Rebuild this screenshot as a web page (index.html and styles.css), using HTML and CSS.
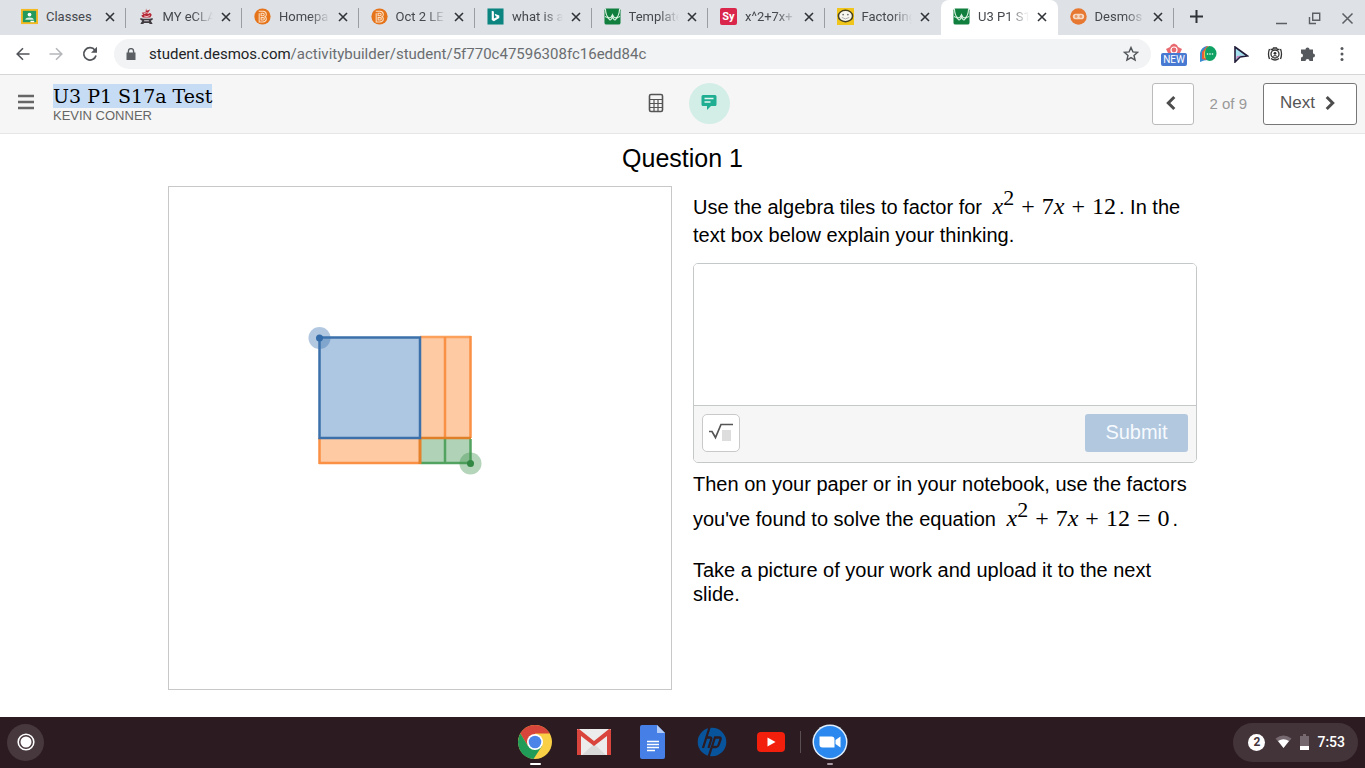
FILE: index.html
```html
<!DOCTYPE html>
<html lang="en">
<head>
<meta charset="utf-8">
<title>U3 P1 S17a Test</title>
<link rel="stylesheet" href="styles.css">
</head>
<body>
<svg class="defs" aria-hidden="true">
  <symbol id="close" viewBox="0 0 10 10"><path d="M1 1l8 8M9 1l-8 8" stroke="currentColor" stroke-width="1.600" fill="none"/></symbol>
  <symbol id="orange-b" viewBox="0 0 18 18"><circle cx="9" cy="9" r="8.600" fill="#e5731a"/><path d="M5 3.500h4.600q3.400.2 3.400 3t-2 2.500q2.300.6 2 3t-3.400 2.800H5.500V5.500M7.500 5.500h2q1.300 0 1.300 1.300T9.500 8.200h-2zM7.500 10.200h2.200q1.300 0 1.300 1.300t-1.300 1.300H7.500z" fill="none" stroke="#fde0c4" stroke-width="1.100"/></symbol>
  <symbol id="desmos" viewBox="0 0 18 18"><rect x=".5" y=".5" width="17" height="17" rx="2" fill="#11803f"/><path d="M1.500 1Q2 9 5.500 10.500M16.500 1Q16 9 12.500 10.500M1 9q3 .5 5 3.500 1.500 1 3-3.500 1.500 4.500 3 3.500 2-3 5-3.500M5.500 10.500Q7.500 10.500 9 7q1.500 3.500 3.500 3.500" fill="none" stroke="#d7f0df" stroke-width="1.200"/></symbol>
</svg>

<nav class="tabbar" aria-label="Browser tabs">
  <div class="tabs">
    <div class="tab"><svg class="fav" viewBox="0 0 18 18"><path fill="#f5b921" d="M0 1h18v16H0z"/><path fill="#249b5c" d="M2 3h14v12H2z"/><circle cx="9" cy="7" r="2" fill="#fff"/><path fill="#d9efe2" d="M4.500 12.500Q5 10 9 10t4.500 2.500z"/><path fill="#fff" d="M10 13.500h4V15h-4z"/></svg><span class="label">Classes</span><button class="x" aria-label="Close"><svg><use href="#close"/></svg></button></div>
    <div class="tab"><svg class="fav" viewBox="0 0 18 18"><path d="M8.500.5l.7 2.500L13 1.500 10.500 5q3.500 0 4 2.500L13 10H5L3.500 8l2-1L4 5l4-.5z" fill="#b62735"/><path d="M6 6q3-2 6 0M6.500 8.500q3 1.500 6-.5" stroke="#f0c9cc" fill="none"/><path d="M2.500 10.500l3 1h7l3-1v2l-2 1 2 3.500h-3l-1-1h-5l-1 1h-3l2-3.500-2-1z" fill="#403b40"/><path d="M6.500 13.500h5" stroke="#ddd"/></svg><span class="label">MY eCLA</span><button class="x" aria-label="Close"><svg><use href="#close"/></svg></button></div>
    <div class="tab"><svg class="fav"><use href="#orange-b"/></svg><span class="label">Homepa</span><button class="x" aria-label="Close"><svg><use href="#close"/></svg></button></div>
    <div class="tab"><svg class="fav"><use href="#orange-b"/></svg><span class="label">Oct 2 LE</span><button class="x" aria-label="Close"><svg><use href="#close"/></svg></button></div>
    <div class="tab"><svg class="fav" viewBox="0 0 18 18"><path fill="#0c8580" d="M.5.5h17v17H.5z"/><path fill="#fff" d="M5 3l2.300.8v7.400l3.200-1.800-1.500-.8-1-2.400 5 1.800v2.600l-5.700 3.500L5 12.600z"/></svg><span class="label">what is a</span><button class="x" aria-label="Close"><svg><use href="#close"/></svg></button></div>
    <div class="tab"><svg class="fav"><use href="#desmos"/></svg><span class="label">Template</span><button class="x" aria-label="Close"><svg><use href="#close"/></svg></button></div>
    <div class="tab"><span class="fav sy">Sy</span><span class="label">x^2+7x+</span><button class="x" aria-label="Close"><svg><use href="#close"/></svg></button></div>
    <div class="tab"><svg class="fav" viewBox="0 0 18 18"><path fill="#f0c51c" d="M0 0h18v18H0z"/><ellipse cx="9" cy="8.500" rx="7.500" ry="6" fill="#f8f7ef" stroke="#45401f" stroke-width="1.600"/><circle cx="6.500" cy="7" r="1" fill="#777"/><circle cx="11.500" cy="7" r="1" fill="#777"/><path d="M5 10q4 3 8 0" fill="none" stroke="#aaa"/></svg><span class="label">Factoring</span><button class="x" aria-label="Close"><svg><use href="#close"/></svg></button></div>
    <div class="tab active"><svg class="fav"><use href="#desmos"/></svg><span class="label">U3 P1 S1</span><button class="x" aria-label="Close"><svg><use href="#close"/></svg></button></div>
    <div class="tab"><svg class="fav" viewBox="0 0 18 18"><circle cx="9" cy="9" r="8.700" fill="#e77832"/><rect x="3" y="6" width="12" height="6" rx="3" fill="#f6d9c4"/><circle cx="6.500" cy="9" r="1.500" fill="#e99a68"/><circle cx="11.500" cy="9" r="1.500" fill="#e99a68"/></svg><span class="label">Desmos</span><button class="x" aria-label="Close"><svg><use href="#close"/></svg></button></div>
  </div>
  <div class="window-tools">
    <button class="tool" aria-label="New tab"><svg width="13" height="13" viewBox="0 0 13 13"><path d="M6.500 0v13M0 6.500h13" stroke="#303337" stroke-width="2"/></svg></button>
    <div class="window-controls">
      <button class="tool" aria-label="Minimize"><svg width="13" height="13" viewBox="0 0 13 13"><path d="M1 11.500h11" stroke="#5b5e63" stroke-width="1.500"/></svg></button>
      <button class="tool" aria-label="Restore"><svg width="13" height="13" viewBox="0 0 13 13"><path d="M4.700 1.200h7v7h-7zM1.500 5v6.500H8" fill="none" stroke="#5b5e63" stroke-width="1.400"/></svg></button>
      <button class="tool" aria-label="Close window"><svg width="13" height="13" viewBox="0 0 13 13"><path d="M1.500 1.500l10 10M11.500 1.500l-10 10" stroke="#5b5e63" stroke-width="1.500"/></svg></button>
    </div>
  </div>
</nav>

<div class="toolbar">
  <div class="history">
    <button class="tool" aria-label="Back"><svg width="14" height="14" viewBox="0 0 14 14"><path d="M13.500 7H1.500M7 1.200L1.200 7 7 12.800" fill="none" stroke="#515458" stroke-width="1.600"/></svg></button>
    <button class="tool" aria-label="Forward"><svg width="14" height="14" viewBox="0 0 14 14"><path d="M.5 7h12M7 1.200L12.800 7 7 12.800" fill="none" stroke="#b5b7ba" stroke-width="1.600"/></svg></button>
    <button class="tool" aria-label="Reload"><svg width="16" height="16" viewBox="0 0 16 16"><path d="M13 4.200A6.200 6.200 0 1 0 14 9.500" fill="none" stroke="#515458" stroke-width="1.700"/><path d="M15 .8v6H9z" fill="#515458"/></svg></button>
  </div>
  <div class="omnibox">
    <svg width="10" height="13" viewBox="0 0 10 13"><path d="M.5 4.500h9V12h-9z" fill="#5b5e63"/><path d="M2.400 5V3.200a2.600 2.600 0 0 1 5.200 0V5" fill="none" stroke="#5b5e63" stroke-width="1.400"/></svg>
    <span class="url"><span class="host">student.desmos.com</span>/activitybuilder/student/5f770c47596308fc16edd84c</span>
    <button class="tool" aria-label="Bookmark"><svg width="16" height="16" viewBox="0 0 16 16"><path d="M8 1.500l1.900 4.400 4.700.4L11 9.400l1.100 4.700L8 11.600l-4.100 2.500L5 9.400 1.400 6.300l4.700-.4z" fill="none" stroke="#515458" stroke-width="1.400"/></svg></button>
  </div>
  <div class="extensions">
    <button class="tool" aria-label="New extension"><svg width="26" height="24" viewBox="0 0 26 24"><path d="M5 7l4-2 1-2 3-1.500L16 3l1 2 4 2-2.500 5h-11z" fill="#e86a70"/><circle cx="13" cy="8" r="3" fill="none" stroke="#fff" stroke-width="1.200"/><rect y="11" width="26" height="13" rx="2" fill="#4879d2"/><text x="13" y="21" text-anchor="middle" class="badge-text">NEW</text></svg></button>
    <button class="tool" aria-label="Chat extension"><svg width="18" height="18" viewBox="0 0 18 18"><path d="M1 17V8a8 8 0 0 1 8-7v14q-4 0-8 2z" fill="#3a8bd2"/><path d="M3 14V7l5-6 3 1-4 13z" fill="#e75c3d"/><path d="M5 13V7l4-6 2 13z" fill="#f3bd3b"/><path d="M10.500 1a7 7.500 0 0 1 0 15q-4.500 0-4.500-7 0-7 4.500-8z" fill="#10a264"/><circle cx="8.500" cy="9" r=".8" fill="#fff"/><circle cx="11" cy="9" r=".8" fill="#fff"/><circle cx="13.500" cy="9" r=".8" fill="#fff"/></svg></button>
    <button class="tool" aria-label="Cursor extension"><svg width="16" height="17" viewBox="0 0 16 17"><path d="M2 1l12.500 9L7 11l-5 5z" fill="#a5e1ee" stroke="#221c3a" stroke-width="1.600"/><path d="M4 10l6-.5-4 1-3 3z" fill="#d777bd"/></svg></button>
    <button class="tool" aria-label="Camera extension"><svg width="16" height="16" viewBox="0 0 16 16"><path d="M2.500 3Q.5 8 2.500 13M13.500 3q2 5 0 10M3.500 3.500h2l1-1.500h3l1 1.500h2M4 12.500q4 3 8 0" fill="none" stroke="#333" stroke-width="1.300"/><circle cx="8" cy="8" r="4" fill="none" stroke="#333" stroke-width="1.300"/><circle cx="8" cy="7.300" r="1.400" fill="#333"/><path d="M5.500 10.500q2.500-2 5 0" stroke="#333" fill="none"/></svg></button>
    <button class="tool" aria-label="Extensions"><svg width="16" height="16" viewBox="0 0 16 16"><path d="M1 3.500h4.500a2 2 0 1 1 4 0H13v4a2 2 0 1 1 0 4V15H9.500a2 2 0 0 0-4 0H1v-3.500a2 2 0 0 0 0-4z" fill="#55585c"/></svg></button>
    <button class="tool" aria-label="Menu"><svg width="4" height="16" viewBox="0 0 4 16"><g fill="#55585c"><circle cx="2" cy="2.500" r="1.500"/><circle cx="2" cy="8" r="1.500"/><circle cx="2" cy="13.500" r="1.500"/></g></svg></button>
  </div>
</div>

<header class="header">
  <div class="header-left">
    <button class="tool menu" aria-label="Activity menu"><svg width="16" height="16" viewBox="0 0 16 16"><path d="M0 2h16M0 8h16M0 14h16" stroke="#666" stroke-width="2.400"/></svg></button>
    <div>
      <h1 class="activity"><span>U3 P1 S17a Test</span></h1>
      <div class="student">KEVIN CONNER</div>
    </div>
  </div>
  <div class="header-center">
    <button class="round" aria-label="Calculator"><svg width="16" height="20" viewBox="0 0 16 20"><rect x="1.500" y="1.500" width="13" height="17" rx="1.500" fill="none" stroke="#555" stroke-width="1.600"/><path d="M2 6.500h12M2 10.500h12M2 14.500h12M6 6.500V18M10 6.500V18" stroke="#555" stroke-width="1.200"/></svg></button>
    <button class="round chat" aria-label="Feedback"><svg width="16" height="17" viewBox="0 0 16 17"><path d="M2 1h12q1.500 0 1.500 1.500v8q0 1.500-1.500 1.500h-4l-4 4v-4H2Q.5 12 .5 10.500v-8Q.5 1 2 1z" fill="#1fae92"/><path d="M3.500 4.500h9M3.500 8h6" stroke="#e3f5f0" stroke-width="1.500"/></svg></button>
  </div>
  <div class="header-right">
    <button class="prev" aria-label="Previous"><svg width="10" height="16" viewBox="0 0 10 16"><path d="M8.300 2L2.300 8l6 6" fill="none" stroke="#4d4d4d" stroke-width="3"/></svg></button>
    <span class="count">2 of 9</span>
    <button class="next">Next<svg width="10" height="16" viewBox="0 0 10 16"><path d="M1.700 2l6 6-6 6" fill="none" stroke="#4d4d4d" stroke-width="3"/></svg></button>
  </div>
</header>

<main class="main">
  <h2 class="question">Question 1</h2>
  <div class="columns">
    <svg class="graph" viewBox="0 0 502 502" role="img" aria-label="Algebra tiles">
      <g fill="#fdcaa4">
        <rect x="251" y="150" width="50" height="101"/><rect x="150" y="251" width="101" height="25"/>
      </g>
      <rect x="251" y="251" width="50" height="25" fill="#b0d2b6"/>
      <rect x="150" y="150" width="101" height="101" fill="#adc6e1"/>
      <path d="M251 150h51" stroke="#fba15c" stroke-width="2.500"/>
      <path d="M276 150v101M301.500 149v102M150.500 251v26M150 276h101" stroke="#fa9043" stroke-width="2.500" fill="none"/>
      <path d="M251 276h51M276 252v25M301.500 252v25" stroke="#52a260" stroke-width="2.500"/>
      <path d="M252 251h50" stroke="#df8029" stroke-width="2.500"/><path d="M251 251v26" stroke="#e5802b" stroke-width="3"/>
      <rect x="150.500" y="150.500" width="100.500" height="100.500" fill="none" stroke="#3b70aa" stroke-width="2.500"/>
      <circle cx="150.500" cy="151" r="11" fill="#3f76b1" opacity=".4"/><circle cx="150.500" cy="151" r="3.500" fill="#336ca9"/>
      <circle cx="301.500" cy="276.500" r="11" fill="#439750" opacity=".4"/><circle cx="301.500" cy="276.500" r="3.500" fill="#328743"/>
    </svg>
    <div class="prompt">
      <p class="intro">Use the algebra tiles to factor for <span class="math"><i>x</i><sup>2</sup><b>+</b>7<i>x</i><b>+</b>12</span>. In the text box below explain your thinking.</p>
      <div class="answer">
        <textarea class="answer-text" aria-label="Your answer"></textarea>
        <div class="answer-bar">
          <button class="root" aria-label="Insert math"><svg width="24" height="20" viewBox="0 0 24 20"><path d="M13 8h9v11h-9z" fill="#ddd"/><path d="M0 9.500h3l3.500 6L12 2.500h12" fill="none" stroke="#555" stroke-width="1.700"/></svg></button>
          <button class="submit">Submit</button>
        </div>
      </div>
      <p class="then">Then on your paper or in your notebook, use the factors you've found to solve the equation <span class="math"><i>x</i><sup>2</sup><b>+</b>7<i>x</i><b>+</b>12<b>=</b>0</span>.</p>
      <p class="upload">Take a picture of your work and upload it to the next slide.</p>
    </div>
  </div>
</main>

<footer class="shelf">
  <button class="launcher" aria-label="Launcher"><svg width="18" height="18" viewBox="0 0 18 18"><circle cx="9" cy="9" r="7.800" fill="none" stroke="#fff" stroke-width="1.600"/><circle cx="9" cy="9" r="5.500" fill="#fff"/></svg></button>
  <div class="apps">
    <button class="app running" aria-label="Chrome"><svg viewBox="0 0 36 36"><circle cx="18" cy="18" r="17" fill="#f9cf45"/><path d="M3.300 9.500a17 17 0 0 1 29.400 0H18v8L11 22z" fill="#d8453a"/><path d="M3.300 9.500A17 17 0 0 0 16.500 35L25 22H11z" fill="#219b58"/><circle cx="18" cy="18" r="8" fill="#fff"/><circle cx="18" cy="18" r="6.300" fill="#4b84e8"/></svg></button>
    <button class="app" aria-label="Gmail"><svg viewBox="0 0 36 36"><path d="M1 5h34v26H1z" fill="#ececec"/><path d="M6 31l12-11 12 11z" fill="#d9d9d9"/><path d="M1 6q0-1 2-1l15 12L33 5q2 0 2 1v25h-4V12L18 22 5 12v19H1z" fill="#d9453d"/></svg></button>
    <button class="app" aria-label="Docs"><svg viewBox="0 0 36 36"><path d="M7 1h15l8 8v24q0 2-2 2H7q-2 0-2-2V3q0-2 2-2z" fill="#4680e6"/><path d="M22 1l8 8h-8z" fill="#b3cdf8"/><path d="M12 17.500h12M12 20.500h12M12 23.500h12M12 26.500h8" stroke="#fff" stroke-width="1.500"/></svg></button>
    <button class="app" aria-label="HP"><svg viewBox="0 0 36 36"><circle cx="18" cy="18" r="14.300" fill="#08549c"/><path d="M15.500 3.500L9 24M12.300 13.500H16q1.800 0 1.200 2L14.500 24M21.300 12.500L14.500 33M21 13.500h4.200q2 0 1.300 2l-2 5.500q-.6 2-2.400 2H18" fill="none" stroke="#2c1c22" stroke-width="2.300"/></svg></button>
    <button class="app" aria-label="YouTube"><svg viewBox="0 0 36 36"><rect x="4" y="8" width="28" height="20" rx="4" fill="#f21f0d"/><path d="M14.500 13.500l8 4.500-8 4.500z" fill="#fff"/></svg></button>
    <button class="app zoom running" aria-label="Zoom"><svg viewBox="0 0 36 36"><circle cx="18" cy="18" r="17.500" fill="#dfeefc"/><circle cx="18" cy="18" r="16" fill="#2a88ee"/><path d="M7.500 12.500h12q3 0 3 3v8h-12q-3 0-3-3zM23.500 16l5-3.500v11l-5-3.500z" fill="#fff"/></svg></button>
  </div>
  <div class="tray">
    <span class="notices">2</span>
    <svg width="17" height="14" viewBox="0 0 17 14"><path d="M.5 3.500q8-6 16 0l-8 9.500z" fill="#776970"/><path d="M3 6q5.500-3.500 11 0l-5.500 7z" fill="#fff"/></svg>
    <svg width="9" height="16" viewBox="0 0 9 16"><path d="M0 2h3V0h3v2h3v14H0z" fill="#75686e"/><path d="M0 12h9v4H0z" fill="#fff"/></svg>
    <span>7:53</span>
  </div>
</footer>
</body>
</html>
```

FILE: styles.css
```css
* { box-sizing: border-box; }
body {
  margin: 0;
  min-height: 100vh;
  display: flex;
  flex-direction: column;
  background: #fff;
  color: #000;
  font-family: "Liberation Sans", Arial, sans-serif;
}
button { font: inherit; cursor: pointer; }
svg { display: block; flex: none; }
.defs { position: absolute; width: 0; height: 0; }
.tool {
  display: flex;
  align-items: center;
  justify-content: center;
  padding: 0;
  border: 0;
  background: none;
}

/* Tabs */
.tabbar {
  display: flex;
  height: 35px;
  padding-left: 9px;
  background: #dee1e6;
  font-family: Roboto, sans-serif;
  font-size: 13px;
  color: #45484d;
}
.tabs { flex: 1; display: flex; min-width: 0; }
.tab {
  flex: 1 1 0;
  min-width: 0;
  display: flex;
  align-items: center;
  gap: 8px;
  padding: 0 11px 2px 12px;
  background: linear-gradient(#9a9da2, #9a9da2) right center / 1px 20px no-repeat;
}
.tab.active { background: #fff; border-radius: 8px 8px 0 0; }
.tab:has(+ .active) { background: none; }
.fav { width: 17px; height: 17px; flex: none; }
.sy {
  background: #d9264a;
  border-radius: 2px;
  color: #fff;
  font-size: 11px;
  font-weight: 700;
  line-height: 17px;
  text-align: center;
}
.label {
  flex: 1;
  min-width: 0;
  overflow: hidden;
  white-space: nowrap;
  line-height: 20px;
  mask-image: linear-gradient(to right, #000 60%, transparent);
}
.tab:first-child .label { mask-image: none; }
.x { width: 10px; height: 10px; padding: 0; border: 0; background: none; color: #303337; }
.x svg { width: 10px; height: 10px; }
.window-tools {
  display: flex;
  align-items: center;
  justify-content: space-between;
  width: 191px;
  padding: 0 11px 2px 16px;
}
.window-controls { display: flex; gap: 20px; padding-top: 4px; }

/* Address bar */
.toolbar {
  display: flex;
  align-items: center;
  height: 40px;
  padding-bottom: 1px;
  border-bottom: 1px solid #d5d6d8;
  background: #fff;
}
.history { display: flex; justify-content: space-between; width: 114px; padding: 0 16px; }
.omnibox {
  flex: 1;
  display: flex;
  align-items: center;
  gap: 13px;
  height: 30px;
  padding: 0 12px;
  border-radius: 15px;
  background: #f1f3f4;
  font: 15px/20px Roboto, sans-serif;
  color: #6a6d71;
}
.url { flex: 1; }
.host { color: #222427; }
.extensions {
  display: flex;
  align-items: center;
  justify-content: space-between;
  width: 214px;
  padding: 0 10px;
}
.extensions .tool { width: 26px; }
.badge-text { fill: #fff; font: 10px Roboto, sans-serif; }

/* Activity header */
.header {
  display: grid;
  grid-template-columns: 1fr auto 1fr;
  align-items: center;
  min-height: 59px;
  padding: 0 8px 1px;
  border-bottom: 1px solid #e6e6e6;
  background: #f6f6f6;
}
.header-left { display: flex; align-items: center; gap: 19px; padding-left: 10px; }
.menu { padding-bottom: 3px; }
.activity { margin: 0; font: 19px/24px "DejaVu Serif", serif; }
.activity span { display: inline-block; background: #c6dcf5; }
.student { font-size: 13px; line-height: 16px; color: #666; }
.header-center { display: flex; gap: 12px; }
.round {
  display: flex;
  align-items: center;
  justify-content: center;
  width: 41px;
  height: 41px;
  padding: 0 0 2px;
  border: 0;
  border-radius: 50%;
  background: none;
}
.chat { background: #d3ede7; }
.header-right { display: flex; align-items: center; justify-content: flex-end; gap: 16px; }
.prev, .next {
  display: flex;
  align-items: center;
  justify-content: center;
  height: 42px;
  border: 1px solid #bbb;
  border-radius: 3px;
  background: #fff;
  color: #555;
}
.prev { width: 42px; padding: 0 3px 2px 0; }
.next { gap: 10px; padding: 0 21px 2px 16px; border-color: #777; font-size: 17px; }
.count { font-size: 15px; color: #999; }

/* Question */
.main { flex: 1; padding: 0 24px 24px; }
.question { margin: 0 0 4px; font-size: 25px; line-height: 48px; font-weight: 400; text-align: center; }
.columns {
  display: grid;
  grid-template-columns: 1fr 1fr;
  gap: 21px;
  align-items: start;
  max-width: 1029px;
  margin: 0 auto;
}
.graph { width: 100%; border: 1px solid #c8c8c8; }
.prompt { padding-top: 7px; font-size: 20px; line-height: 24px; }
.prompt p { margin: 0; }
.prompt .intro { margin-bottom: 14px; line-height: 28px; }
.prompt .then { margin: 4px 0 21px; line-height: 35px; }
.math {
  margin: 0 3px 0 5px;
  font-family: "Liberation Serif", "Times New Roman", serif;
  font-size: 24px;
  line-height: 0;
  white-space: nowrap;
}
.math b { margin: 0 7px; font-weight: 400; }
.math sup { font-size: 22px; line-height: 0; vertical-align: 9px; }
.answer { overflow: hidden; border: 1px solid #c5c8c8; border-radius: 5px; }
.answer-text {
  display: block;
  width: 100%;
  height: 142px;
  padding: 10px;
  border: 0;
  border-bottom: 1px solid #c5c8c8;
  outline: 0;
  resize: none;
  font: inherit;
}
.answer-bar { display: flex; justify-content: space-between; padding: 8px 8px 10px; background: #f6f6f6; }
.root {
  display: flex;
  align-items: center;
  justify-content: center;
  width: 38px;
  height: 38px;
  padding: 0 0 2px;
  border: 1px solid #c9c9c9;
  border-radius: 5px;
  background: #fff;
}
.submit { width: 103px; height: 38px; padding: 0 0 2px; border: 0; border-radius: 3px; background: #b2c8df; color: #f6fafe; }

/* Shelf */
.shelf {
  display: grid;
  grid-template-columns: 1fr auto 1fr;
  align-items: center;
  height: 51px;
  padding: 0 7px 1px;
  background: #2c1c22;
}
.launcher {
  display: flex;
  align-items: center;
  justify-content: center;
  width: 37px;
  height: 37px;
  padding: 0;
  border: 0;
  border-radius: 50%;
  background: #47383e;
}
.apps { display: flex; gap: 23px; }
.app { position: relative; width: 36px; height: 36px; padding: 0; border: 0; background: none; }
.app svg { width: 36px; height: 36px; }
.running::after {
  content: "";
  position: absolute;
  bottom: -5px;
  left: 50%;
  width: 11px;
  height: 2px;
  margin-left: -5px;
  border-radius: 1px;
  background: #fff;
}
.zoom.running::after { width: 6px; margin-left: -3px; background: #a899a3; }
.zoom::before {
  content: "";
  position: absolute;
  top: 7px;
  left: -12px;
  width: 1px;
  height: 22px;
  background: #5c4f54;
}
.tray {
  justify-self: end;
  display: flex;
  align-items: center;
  gap: 8px;
  height: 39px;
  padding: 0 13px 0 15px;
  border-radius: 20px;
  background: #43343a;
  color: #fff;
  font: 500 14px/20px Roboto, sans-serif;
}
.notices {
  width: 17px;
  height: 17px;
  margin-right: 2px;
  border-radius: 50%;
  background: #fff;
  color: #43343a;
  font-size: 12px;
  font-weight: 700;
  line-height: 17px;
  text-align: center;
}
```
